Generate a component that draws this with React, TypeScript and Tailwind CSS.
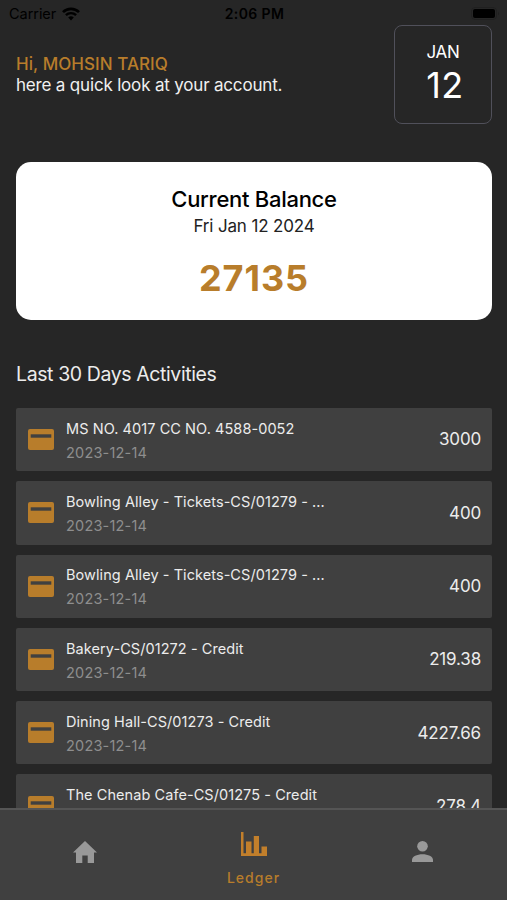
import { clsx } from 'clsx'

interface Activity {
  title: string
  date: string
  amount: string
}

const activities: Activity[] = [
  { title: 'MS NO. 4017 CC NO. 4588-0052', date: '2023-12-14', amount: '3000' },
  { title: 'Bowling Alley - Tickets-CS/01279 - ...', date: '2023-12-14', amount: '400' },
  { title: 'Bowling Alley - Tickets-CS/01279 - ...', date: '2023-12-14', amount: '400' },
  { title: 'Bakery-CS/01272 - Credit', date: '2023-12-14', amount: '219.38' },
  { title: 'Dining Hall-CS/01273 - Credit', date: '2023-12-14', amount: '4227.66' },
  { title: 'The Chenab Cafe-CS/01275 - Credit', date: '2023-12-14', amount: '278.4' },
]

function WifiIcon() {
  return (
    <svg width="18" height="14" viewBox="0 0 18 14" fill="none">
      <path d="M1 5.1a11.4 11.4 0 0 1 16 0" stroke="#000" strokeWidth="2.7" />
      <path d="M3.9 8.2a7.2 7.2 0 0 1 10.2 0" stroke="#000" strokeWidth="2.4" />
      <path d="M9 13.4 6.2 10.5a4 4 0 0 1 5.6 0Z" fill="#000" />
    </svg>
  )
}

function BatteryIcon() {
  return (
    <svg width="29" height="13" viewBox="0 0 29 13">
      <rect x="0.5" y="0.5" width="25" height="12" rx="3.5" fill="none" stroke="#202020" />
      <rect x="2" y="2" width="22" height="9" rx="2" fill="#000" />
      <path d="M27 4.5c1.4.6 1.4 3.4 0 4Z" fill="#202020" />
    </svg>
  )
}

function CardIcon() {
  return (
    <svg width="26" height="21" viewBox="0 0 26 21" className="shrink-0">
      <rect width="26" height="21" rx="2" fill="#b87d2b" />
      <rect x="2.7" y="5.3" width="20.6" height="3.4" fill="#404040" />
    </svg>
  )
}

function HomeIcon() {
  return (
    <svg width="24" height="22" viewBox="0 0 24 22" fill="#999">
      <path d="M12 0 24 11.4h-3V22h-6.3v-7.5h-5.4V22H3V11.4H0Z" />
    </svg>
  )
}

function ChartIcon() {
  return (
    <svg width="26" height="24" viewBox="0 0 26 24" fill="#c27f2b">
      <path d="M0 0h2.5v21.3H26V24H0Z" />
      <path d="M5 9.5h5.5V22H5ZM12.8 4h5.2v18h-5.2ZM20.5 14.5H26V22h-5.5Z" />
    </svg>
  )
}

function PersonIcon() {
  return (
    <svg width="21" height="21" viewBox="0 0 21 21" fill="#999">
      <circle cx="10.5" cy="5.3" r="5.3" />
      <path d="M0 21v-2c0-3.5 5-5.7 10.5-5.7S21 15.500 21 19v2Z" />
    </svg>
  )
}

function StatusBar() {
  return (
    <div className="grid h-[25px] shrink-0 grid-cols-3 items-center pt-0.5 pr-[7px] pl-[9px] text-black">
      <div className="flex items-center gap-1.5">
        <span className="text-[14.5px] tracking-[-0.05px]">Carrier</span>
        <WifiIcon />
      </div>
      <span className="text-center text-[14px] font-semibold tracking-[0.4px]">2:06 PM</span>
      <div className="flex justify-end">
        <BatteryIcon />
      </div>
    </div>
  )
}

function ActivityRow({ title, date, amount }: Activity) {
  return (
    <div className="flex h-[63.3px] shrink-0 items-center rounded-xs bg-[#404040] pr-[11px] pl-3">
      <CardIcon />
      <div className="ml-3 flex-1 pt-px">
        <p className="text-[14.5px] leading-[25px] tracking-[0.07px] text-[#ececec]">{title}</p>
        <p className="text-[14.5px] leading-[24px] tracking-[0.2px] text-[#8e8e8e]">{date}</p>
      </div>
      <span className="pt-px text-[17px] tracking-[-0.17px] text-[#ececec]">{amount}</span>
    </div>
  )
}

const tabs = [
  { name: 'Home', icon: HomeIcon, active: false },
  { name: 'Ledger', icon: ChartIcon, active: true },
  { name: 'Profile', icon: PersonIcon, active: false },
]

function TabBar() {
  return (
    <nav className="grid h-[92px] shrink-0 grid-cols-3 border-t-2 border-[#555] bg-[#404040]">
      {tabs.map(({ name, icon: Icon, active }) => (
        <button
          key={name}
          aria-label={name}
          className={clsx('flex flex-col items-center', active ? 'pt-[22px]' : 'pt-[31px]')}
        >
          <Icon />
          {active && (
            <span className="mt-3 text-[14px] leading-[20px] font-medium tracking-[1px] text-[#b87d2b]">
              {name}
            </span>
          )}
        </button>
      ))}
    </nav>
  )
}

export default function App() {
  return (
    <div className="flex h-[900px] w-[507px] flex-col overflow-hidden bg-[#262626] font-['Inter',sans-serif]">
      <StatusBar />

      <main className="flex min-h-0 flex-1 flex-col overflow-hidden pr-[15px] pl-4">
        <header className="flex h-[99px] shrink-0 items-center justify-between">
          <div className="text-[17px] leading-[21px]">
            <p className="font-medium tracking-[0.05px] text-[#b87d2b]">Hi, MOHSIN TARIQ</p>
            <p className="tracking-[-0.18px] text-[#f0f0f0]">here a quick look at your account.</p>
          </div>
          <div className="flex h-[99px] w-[98px] flex-col items-center rounded-lg border border-[#50505a] pt-4 text-white">
            <span className="text-[17px] leading-[21px] tracking-[-0.3px]">JAN</span>
            <span className="pl-1 text-[36px] leading-[44px] tracking-[0.5px]">12</span>
          </div>
        </header>

        <section className="mt-[38px] flex h-[158px] shrink-0 flex-col items-center rounded-[15px] bg-white pt-6">
          <h1 className="text-[22px] leading-[27px] font-medium tracking-[-0.28px] text-black">
            Current Balance
          </h1>
          <p className="text-[17px] leading-[27px] tracking-[-0.15px] text-[#222]">Fri Jan 12 2024</p>
          <p className="mt-[15px] text-[36px] leading-[46px] font-bold tracking-[0.9px] text-[#b87d2b]">
            27135
          </p>
        </section>

        <h2 className="mt-[42px] text-[19.5px] leading-[24px] tracking-[-0.4px] text-[#ececec]">
          Last 30 Days Activities
        </h2>

        <div className="mt-[22px] flex flex-col gap-2.5">
          {activities.map((activity, index) => (
            <ActivityRow key={index} {...activity} />
          ))}
        </div>
      </main>

      <TabBar />
    </div>
  )
}
